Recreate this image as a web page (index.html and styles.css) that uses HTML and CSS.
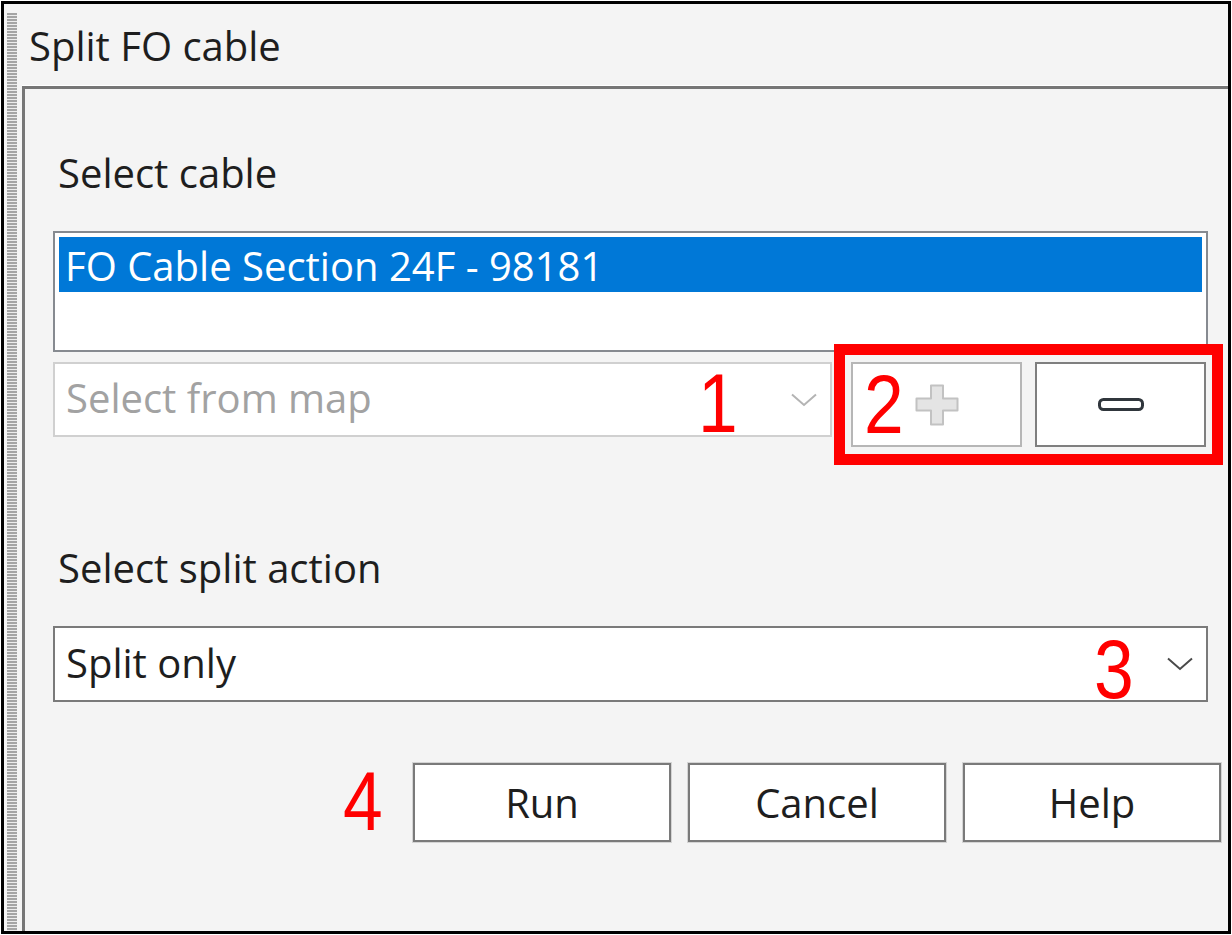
FILE: index.html
```html
<!DOCTYPE html>
<html lang="en">
<head>
    <meta charset="UTF-8">
    <meta name="viewport" content="width=device-width, initial-scale=1.0">
    <title>Split FO cable</title>
    <link rel="stylesheet" href="styles.css">
</head>
<body>
    <div class="window">
        <div class="grip"></div>
        <div class="main">
            <div class="title">Split FO cable</div>

            <div class="panel">
                <div class="label label-cable">Select cable</div>

                <div class="listbox">
                    <div class="item selected">FO Cable Section 24F - 98181</div>
                </div>

                <div class="pick-row">
                    <div class="combo disabled">
                        <span class="combo-text">Select from map</span>
                        <svg class="chevron" width="26" height="14" viewBox="0 0 26 14">
                            <polyline points="1,1.5 13,12 25,1.5" fill="none" stroke="currentColor" stroke-width="2"/>
                        </svg>
                    </div>
                    <button class="tool add" disabled>
                        <svg width="44" height="42" viewBox="0 0 44 42">
                            <path d="M16 1.5h12v13h14.5v12H28v14H16v-14H1.5v-12H16z" fill="#e4e4e4" stroke="#c2c2c2" stroke-width="2" stroke-linejoin="round"/>
                        </svg>
                    </button>
                    <button class="tool remove">
                        <svg width="46" height="13" viewBox="0 0 46 13">
                            <rect x="1.5" y="1.5" width="43" height="10" rx="4" fill="#fff" stroke="#30363c" stroke-width="3"/>
                        </svg>
                    </button>
                </div>

                <div class="label label-action">Select split action</div>

                <div class="combo action-combo">
                    <span class="combo-text">Split only</span>
                    <svg class="chevron" width="26" height="14" viewBox="0 0 26 14">
                        <polyline points="1,1.5 13,12 25,1.5" fill="none" stroke="currentColor" stroke-width="2"/>
                    </svg>
                </div>

                <div class="actions">
                    <button class="btn">Run</button>
                    <button class="btn">Cancel</button>
                    <button class="btn">Help</button>
                </div>
            </div>
        </div>
    </div>

    <!-- callout annotations drawn over the dialog -->
    <div class="callout-box"></div>
    <span class="callout n1">1</span>
    <span class="callout n2">2</span>
    <span class="callout n3">3</span>
    <span class="callout n4">4</span>
</body>
</html>
```

FILE: styles.css
```css
/* General Styles */
body {
    margin: 0;
    padding: 0;
    background: #fff;
    font-family: 'Open Sans', 'Noto Sans', sans-serif;
    color: #1e1e1e;
    position: relative;
    width: 1232px;
    height: 935px;
    overflow: hidden;
}

.window {
    margin: 1px 0 0 1px;
    width: 1224px;
    height: 927px;
    border: 3px solid #000;
    background: #f4f4f4;
    display: flex;
}

.grip {
    width: 10px;
    margin: 9px 5px 0 3px;
    background: repeating-linear-gradient(to bottom, #a4a4a4 0, #a4a4a4 2px, #ececec 2px, #ececec 3px);
}

.main {
    flex: 1;
    display: flex;
    flex-direction: column;
}

.title {
    height: 63px;
    padding: 18px 0 0 7px;
    font-size: 40px;
    line-height: 48px;
    border-bottom: 1px solid #fff;
}

/* Sunken group panel */
.panel {
    flex: 1;
    border-top: 3px solid #767676;
    border-left: 3px solid #767676;
    padding: 0 20px 0 28px;
    display: flex;
    flex-direction: column;
}

.label {
    font-size: 40px;
    line-height: 48px;
    padding-left: 5px;
}

.label-cable {
    margin-top: 60px;
}

.label-action {
    margin-top: 97px;
}

.listbox {
    margin-top: 34px;
    height: 121px;
    box-sizing: border-box;
    border: 2px solid #868a90;
    background: #fff;
    padding: 4px;
}

.item {
    height: 55px;
    box-sizing: border-box;
    padding: 2px 0 0 6px;
    font-size: 40px;
    line-height: 53px;
    white-space: nowrap;
}

.item.selected {
    background: #0078d7;
    color: #fff;
}

.pick-row {
    margin-top: 10px;
    display: flex;
    align-items: flex-start;
}

.combo {
    height: 76px;
    box-sizing: border-box;
    border: 2px solid #7a7a7a;
    background: #fff;
    display: flex;
    align-items: center;
    padding: 0 13px 4px 11px;
    font-size: 40px;
    color: #1e1e1e;
}

.combo .combo-text {
    flex: 1;
}

.combo .chevron {
    color: #4a4a4a;
    margin-top: 4px;
}

.action-combo {
    margin-top: 34px;
}

.combo.disabled {
    flex: 1;
    height: 75px;
    border-color: #d0d0d0;
    color: #a2a2a2;
}

.combo.disabled .chevron {
    color: #b4b4b4;
}

.tool {
    width: 171px;
    height: 85px;
    box-sizing: border-box;
    background: #fff;
    border: 2px solid #7f7f7f;
    display: flex;
    align-items: center;
    justify-content: center;
    padding: 0;
}

.tool.add {
    margin-left: 19px;
    border-color: #b6b6b6;
    justify-content: flex-start;
    padding-left: 62px;
}

.tool.remove {
    margin-left: 13px;
    margin-right: 2px;
}

.actions {
    margin-top: 61px;
    margin-right: -13px;
    display: flex;
    justify-content: flex-end;
    gap: 17px;
}

.btn {
    width: 258px;
    height: 79px;
    box-sizing: border-box;
    background: #fff;
    border: 2px solid #7a7a7a;
    box-shadow: 0 0 0 1px #d4d4d4;
    font-family: 'Open Sans', 'Noto Sans', sans-serif;
    font-size: 40px;
    color: #1e1e1e;
    padding: 0;
}

/* Red callouts */
.callout-box {
    position: absolute;
    left: 834px;
    top: 344px;
    width: 389px;
    height: 121px;
    box-sizing: border-box;
    border: 11px solid #ff0000;
}

.callout {
    position: absolute;
    font-family: 'Liberation Sans', Arial, sans-serif;
    font-size: 84px;
    line-height: 84px;
    color: #ff0000;
    transform: scaleX(0.85);
    transform-origin: left top;
}

.n1 { left: 698px; top: 361px; }
.n2 { left: 864px; top: 362px; }
.n3 { left: 1094px; top: 627px; }
.n4 { left: 343px; top: 759px; }
```
